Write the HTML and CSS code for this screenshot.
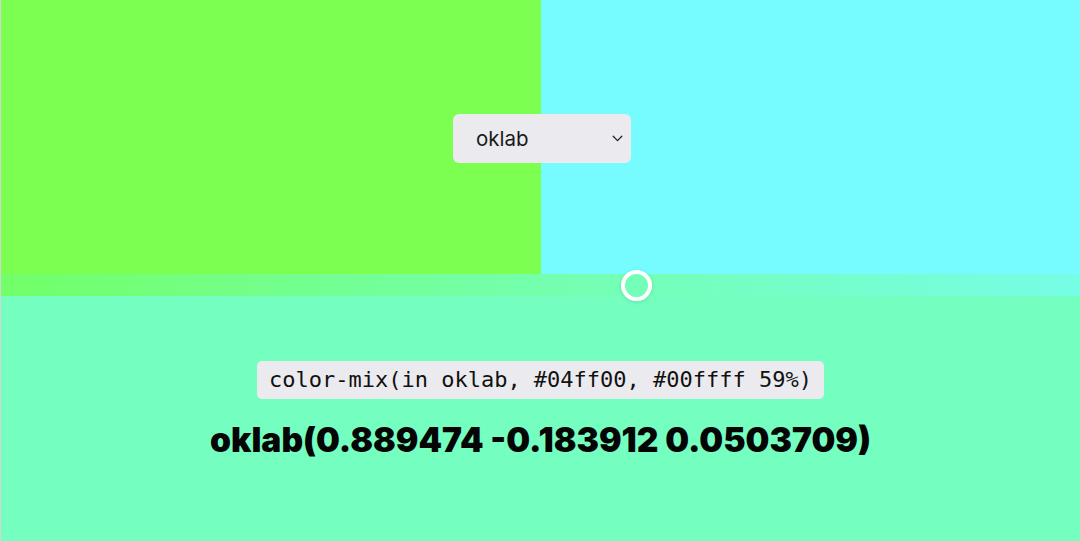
FILE: index.html
```html
<!DOCTYPE html>
<html>
<head>
<meta charset="utf-8">
<link rel="stylesheet" href="styles.css">
</head>
<body>
<div class="page">
  <div class="swatches">
    <div class="swatch swatch-a"></div>
    <div class="swatch swatch-b"></div>
    <div class="picker">
      <span class="picker-label">oklab</span>
      <svg class="chev" width="11" height="7" viewBox="0 0 11 7"><path d="M1.2 1.3 L5.5 5.6 L9.8 1.3" fill="none" stroke="#222" stroke-width="1.3" stroke-linecap="round" stroke-linejoin="round"/></svg>
    </div>
  </div>
  <div class="track">
    <div class="thumb" style="left:59%"></div>
  </div>
  <div class="result">
    <code class="expr">color-mix(in oklab, #04ff00, #00ffff 59%)</code>
    <div class="value">oklab(0.889474 -0.183912 0.0503709)</div>
  </div>
</div>
</body>
</html>
```

FILE: styles.css
```css
html, body {
  margin: 0;
  padding: 0;
  height: 100%;
  background: #ffffff;
}
.page {
  height: 541px;
  display: flex;
  flex-direction: column;
  border-left: 1px solid #d4d4d4;
  box-sizing: border-box;
  font-family: Inter, "Noto Sans", sans-serif;
}
.swatches {
  position: relative;
  height: 274px;
  display: grid;
  grid-template-columns: 540px 1fr;
}
.swatch-a { background: #7cff50; }
.swatch-b { background: #76fcff; }
.picker {
  position: absolute;
  left: 452px;
  top: 114px;
  width: 178px;
  height: 49px;
  box-sizing: border-box;
  background: #ebebef;
  border-radius: 6px;
  display: flex;
  align-items: center;
  justify-content: space-between;
  padding: 0 8px 0 23px;
}
.picker-label {
  font-size: 20.5px;
  color: #1a1a1a;
  font-family: Inter, "Noto Sans", sans-serif;
}
.track {
  position: relative;
  height: 22px;
  background: linear-gradient(to right, #72ff68, #74ffb4 55%, #76fde6);
}
.thumb {
  position: absolute;
  top: 50%;
  width: 31px;
  height: 31px;
  margin-left: -16.5px;
  margin-top: -15.5px;
  box-sizing: border-box;
  border: 4px solid #ffffff;
  border-radius: 50%;
  box-shadow: 0 1px 4px rgba(0, 0, 0, 0.12);
}
.result {
  flex: 1;
  background: #74ffc0;
  display: flex;
  flex-direction: column;
  align-items: center;
  padding-top: 65px;
}
.expr {
  display: block;
  background: #ebebef;
  border-radius: 5px;
  height: 38px;
  line-height: 38px;
  padding: 0 12px;
  font-family: "DejaVu Sans Mono", monospace;
  font-size: 22px;
  color: #111;
}
.value {
  margin-top: 20px;
  font-family: Inter, sans-serif;
  font-weight: 900;
  font-size: 33.6px;
  color: #050505;
}
```
